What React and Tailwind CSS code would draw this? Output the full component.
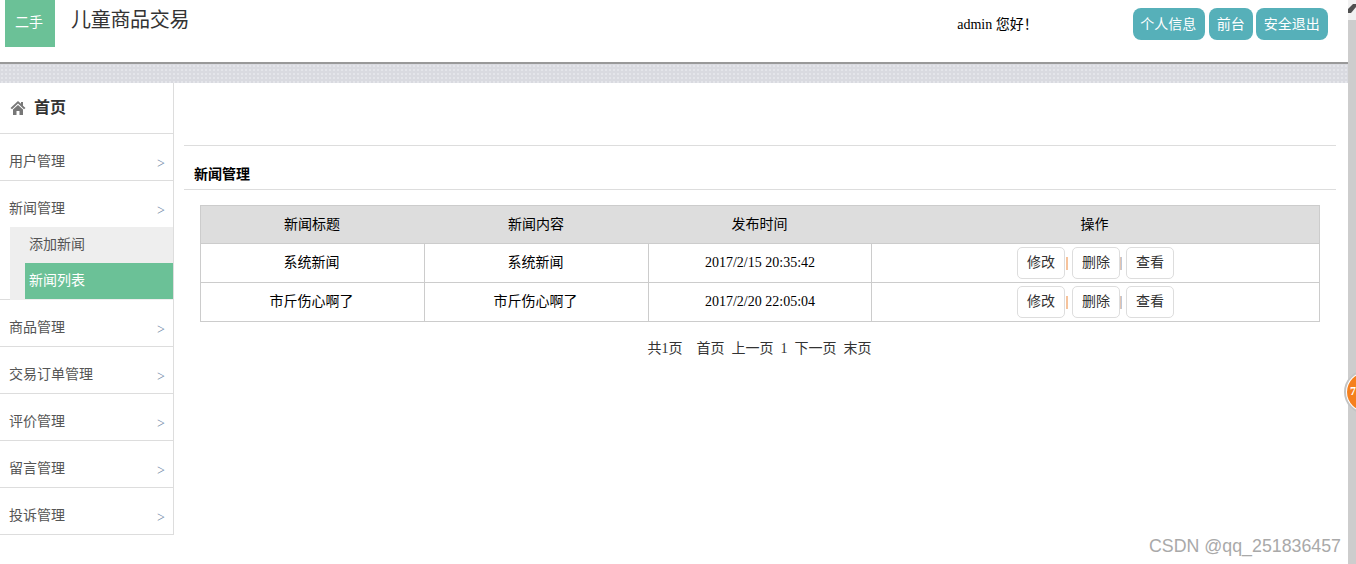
import React from 'react';

const serif = { fontFamily: '"Liberation Serif", "Noto Sans CJK SC", serif' };

const menus = ['用户管理', '新闻管理', '商品管理', '交易订单管理', '评价管理', '留言管理', '投诉管理'];

const news = [
  { title: '系统新闻', content: '系统新闻', time: '2017/2/15 20:35:42' },
  { title: '市斤伤心啊了', content: '市斤伤心啊了', time: '2017/2/20 22:05:04' },
];

const HomeIcon = () => (
  <svg width="16" height="16" viewBox="0 0 16 16" fill="#777777">
    <path d="M8 1 L0.5 8 L2 9.2 L8 3.6 L14 9.2 L15.5 8 L13 5.7 V2 H11 V3.8 Z" />
    <path d="M3 9.6 L8 5 L13 9.6 V15 H9.5 V11 H6.5 V15 H3 Z" />
  </svg>
);

const ActionBtn = ({ children }) => (
  <span className="flex h-[32px] w-[48px] items-center justify-center rounded-[5px] border border-[#dddddd] pb-[2px] text-[14px] text-[#333333]">
    {children}
  </span>
);

const Row = ({ item }) => (
  <div className="grid h-[39px] grid-cols-[224px_224px_223px_1fr] border-b border-[#cccccc] text-[14px] text-black">
    <div className="flex items-center justify-center border-r border-[#cccccc] pb-[2px] pr-[2px]">{item.title}</div>
    <div className="flex items-center justify-center border-r border-[#cccccc] pb-[2px] pr-[2px]">{item.content}</div>
    <div className="flex items-center justify-center border-r border-[#cccccc] pb-[2px]">{item.time}</div>
    <div className="flex items-center justify-center">
      <ActionBtn>修改</ActionBtn>
      <span className="ml-[1px] mr-[4px] h-[13px] w-[2px] bg-[#f6c39c]"></span>
      <ActionBtn>删除</ActionBtn>
      <span className="mr-[4px] h-[13px] w-[2px] bg-gradient-to-r from-[#f6c39c] to-[#a8c8ec]"></span>
      <ActionBtn>查看</ActionBtn>
    </div>
  </div>
);

const MenuItem = ({ name, children }) => (
  <div className="border-b border-[#dddddd]">
    <div className="flex h-[46px] items-center justify-between pl-[9px] pr-[8px] pt-[8px] text-[14px] text-[#555555]">
      <span>{name}</span>
      <span className="mt-[4px] text-[14px] text-[#6f8aa8]" style={serif}>&gt;</span>
    </div>
    {children}
  </div>
);

export default function App() {
  return (
    <div className="relative flex h-[564px] w-[1356px] overflow-hidden bg-white" style={serif}>
      <div className="flex w-[1348px] flex-col">
        {/* top bar */}
        <header className="flex h-[62px] items-start">
          <div className="ml-[5px] flex h-[47px] w-[50px] items-center justify-center bg-[#6bc197] pb-[3px] pr-[2px] text-[14px] text-white">二手</div>
          <div className="ml-[16px] mt-[7px] text-[20px] leading-[26px] tracking-[-0.3px] text-[#333333]">儿童商品交易</div>
          <div className="ml-[768px] mt-[16px] w-[176px] text-[14px] leading-[18px] text-black">admin 您好！</div>
          <div className="mt-[8px] flex text-[14px] text-white">
            <span className="flex h-[32px] w-[72px] items-center justify-center rounded-[8px] bg-[#56b0b9] pr-[2px]">个人信息</span>
            <span className="ml-[4px] flex h-[32px] w-[44px] items-center justify-center rounded-[8px] bg-[#56b0b9] pr-[1px]">前台</span>
            <span className="ml-[3px] flex h-[32px] w-[72px] items-center justify-center rounded-[8px] bg-[#56b0b9] pr-[1px]">安全退出</span>
          </div>
        </header>
        <div className="h-[2px] bg-[#999999]"></div>
        <div className="h-[19px] bg-[#d9dae0] bg-[radial-gradient(#e4e5ea_1px,transparent_1px)] bg-[length:4px_4px]"></div>

        <div className="flex min-h-0 flex-1">
          {/* sidebar */}
          <aside className="h-[452px] w-[174px] shrink-0 border-r border-[#dddddd]">
            <div className="flex h-[51px] items-center gap-[8px] border-b border-[#dddddd] pl-[10px] text-[16px] font-bold text-[#333333]">
              <HomeIcon />
              首页
            </div>
            <MenuItem name={menus[0]} />
            <MenuItem name={menus[1]}>
              <div className="-mb-px ml-[10px] h-[73px] bg-[#eeeeee] text-[14px]">
                <div className="flex h-[36px] items-center pb-[2px] pl-[19px] text-[#555555]">添加新闻</div>
                <div className="ml-[15px] flex h-[36px] items-center bg-[#6bc197] pb-[2px] pl-[4px] text-white">新闻列表</div>
              </div>
            </MenuItem>
            {menus.slice(2).map((name) => (
              <MenuItem key={name} name={name} />
            ))}
          </aside>

          {/* content */}
          <main className="flex-1 pl-[10px] pr-[12px] pt-[62px]">
            <div className="flex h-[45px] items-end border-y border-[#dddddd] pb-[4px] pl-[10px] text-[14px] font-bold text-black">新闻管理</div>
            <div className="ml-[16px] mr-[16px] mt-[15px] border-x border-t border-[#cccccc]">
              <div className="grid h-[38px] grid-cols-[224px_224px_223px_1fr] border-b border-[#cccccc] bg-[#dddddd] text-[14px] text-black">
                <div className="flex items-center justify-center pr-[2px]">新闻标题</div>
                <div className="flex items-center justify-center pr-[2px]">新闻内容</div>
                <div className="flex items-center justify-center pr-[2px]">发布时间</div>
                <div className="flex items-center justify-center pr-[2px]">操作</div>
              </div>
              {news.map((item) => (
                <Row key={item.time} item={item} />
              ))}
            </div>
            <div className="mt-[18px] flex justify-center gap-[7px] pr-[1px] text-[14px] leading-[18px] text-[#333333]">
              <span className="mr-[7px]">共1页</span>
              <span>首页</span>
              <span>上一页</span>
              <span>1</span>
              <span>下一页</span>
              <span>末页</span>
            </div>
          </main>
        </div>
      </div>

      {/* scrollbar */}
      <div className="flex w-[8px] flex-col bg-[#f1f1f1]">
        <div className="flex h-[20px] items-start pt-[4px]">
          <svg width="8" height="9" viewBox="0 0 8 9" fill="#505050">
            <path d="M0 9 L0 5 L5 0 L8 0 L8 3 L3 9 Z" />
          </svg>
        </div>
        <div className="flex-1 bg-[#cdcdcd]"></div>
      </div>

      {/* floating badge */}
      <div className="absolute left-[1344px] top-[370px] flex h-[44px] w-[44px] items-center rounded-full border-[2px] border-[#c4c4c4] bg-white p-[1px]">
        <div className="flex h-full w-full items-center rounded-full bg-[#f5801e] pb-[2px] pl-[3px] text-[12px] font-bold text-white">7</div>
      </div>

      {/* watermark */}
      <div
        className="absolute right-[15px] top-[536px] text-[17.8px] leading-[20px] text-[#a9a9a9]"
        style={{ fontFamily: '"Liberation Sans", sans-serif' }}
      >
        CSDN @qq_251836457
      </div>
    </div>
  );
}
